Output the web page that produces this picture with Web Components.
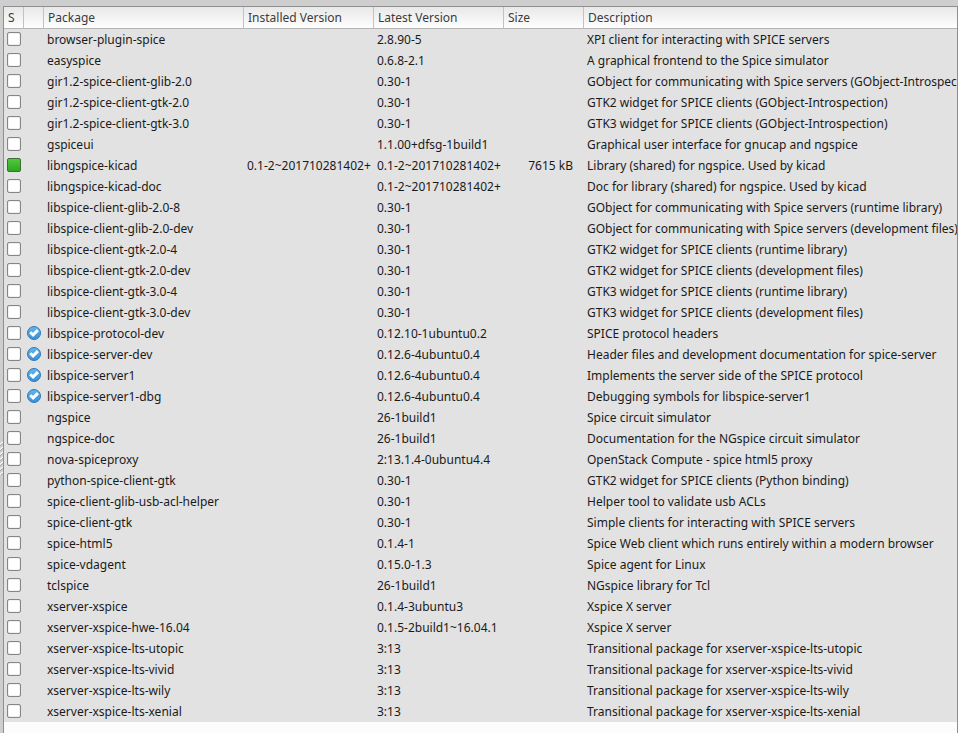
<!DOCTYPE html>
<html lang="en">
<head>
<meta charset="utf-8">
<meta name="viewport" content="width=device-width, initial-scale=1">
<title>Packages</title>
<style>
    html, body {
        height: 100%;
    }
    body {
        margin: 0;
        overflow: hidden;
        background: #cecece;
        color: #1a1a1a;
        font-family: "Noto Sans", sans-serif;
        font-size: 12px;
    }
</style>
</head>
<body>
<list-pane>
    <pane-grip slot="handle"></pane-grip>
    <package-table></package-table>
</list-pane>

<script>
const paneTemplate = document.createElement('template');
paneTemplate.innerHTML = `
    <style>
        :host {
            display: flex;
            height: 100%;
            padding-top: 6px;
            box-sizing: border-box;
        }
        .handle {
            display: flex;
            width: 3px;
            flex: none;
            align-items: center;
        }
        .view {
            flex: 1;
            min-width: 0;
            overflow: hidden;
            background: #fcfcfc;
            border: 1px solid #8f8f8f;
            border-bottom: none;
        }
    </style>
    <div class="handle"><slot name="handle"></slot></div>
    <div class="view"><slot></slot></div>
`;

class ListPane extends HTMLElement {
    constructor() {
        super();
        this.attachShadow({ mode: 'open' });
        this.shadowRoot.appendChild(paneTemplate.content.cloneNode(true));
    }
}
customElements.define('list-pane', ListPane);

const gripTemplate = document.createElement('template');
gripTemplate.innerHTML = `
    <style>
        :host {
            display: block;
            margin-top: 176px;
        }
        svg {
            display: block;
        }
    </style>
    <svg width="3" height="34" aria-hidden="true">
        <defs>
            <pattern id="dots" width="3" height="5" patternUnits="userSpaceOnUse">
                <path d="M0 3.5L3 1" stroke="#fafafa" stroke-width="1.3"/>
                <path d="M0 4.8L3 2.3" stroke="#9c9c9c" stroke-width=".8"/>
            </pattern>
        </defs>
        <rect width="3" height="34" fill="url(#dots)"/>
    </svg>
`;

class PaneGrip extends HTMLElement {
    constructor() {
        super();
        this.attachShadow({ mode: 'open' });
        this.shadowRoot.appendChild(gripTemplate.content.cloneNode(true));
    }
}
customElements.define('pane-grip', PaneGrip);

const headerTemplate = document.createElement('template');
headerTemplate.innerHTML = `
    <style>
        :host {
            display: block;
        }
        button {
            display: block;
            width: 100%;
            height: 22px;
            padding: 0 4px;
            border: none;
            border-right: 1px solid #c2c2c2;
            border-bottom: 1px solid #b4b4b4;
            background: linear-gradient(#e8e8e8, #fefefe);
            color: #3c3c3c;
            font: inherit;
            line-height: 20px;
            text-align: left;
            white-space: nowrap;
        }
        :host([last]) button {
            border-right: none;
        }
    </style>
    <button type="button"><slot></slot></button>
`;

class ColumnHeader extends HTMLElement {
    constructor() {
        super();
        this.attachShadow({ mode: 'open' });
        this.shadowRoot.appendChild(headerTemplate.content.cloneNode(true));
        const label = this.getAttribute('label');
        if (label) {
            this.shadowRoot.querySelector('button').setAttribute('aria-label', label);
        }
    }
}
customElements.define('column-header', ColumnHeader);

const markTemplate = document.createElement('template');
markTemplate.innerHTML = `
    <style>
        :host {
            display: block;
            width: 14px;
            height: 14px;
        }
        svg {
            display: block;
        }
    </style>
    <svg width="14" height="14" viewBox="0 0 14 14" aria-hidden="true">
        <defs>
            <linearGradient id="disc" x2="0" y2="1">
                <stop offset="0" stop-color="#5fb8f0"/>
                <stop offset="1" stop-color="#3690dc"/>
            </linearGradient>
        </defs>
        <circle cx="7" cy="7" r="6.5" fill="url(#disc)" stroke="#3a76aa"/>
        <path d="M3.2 6.2L6.1 8.9L10.9 4.1" fill="none" stroke="#fff" stroke-width="2.9"/>
    </svg>
`;

// Round badge for packages supported by the distribution
class SupportedMark extends HTMLElement {
    constructor() {
        super();
        this.attachShadow({ mode: 'open' });
        this.shadowRoot.appendChild(markTemplate.content.cloneNode(true));
    }
}
customElements.define('supported-mark', SupportedMark);

// name, latest version, description, extras
const packages = [
    ['browser-plugin-spice', '2.8.90-5', 'XPI client for interacting with SPICE servers'],
    ['easyspice', '0.6.8-2.1', 'A graphical frontend to the Spice simulator'],
    ['gir1.2-spice-client-glib-2.0', '0.30-1', 'GObject for communicating with Spice servers (GObject-Introspect'],
    ['gir1.2-spice-client-gtk-2.0', '0.30-1', 'GTK2 widget for SPICE clients (GObject-Introspection)'],
    ['gir1.2-spice-client-gtk-3.0', '0.30-1', 'GTK3 widget for SPICE clients (GObject-Introspection)'],
    ['gspiceui', '1.1.00+dfsg-1build1', 'Graphical user interface for gnucap and ngspice'],
    ['libngspice-kicad', '0.1-2~201710281402+', 'Library (shared) for ngspice. Used by kicad', { installed: '0.1-2~201710281402+', size: '7615 kB' }],
    ['libngspice-kicad-doc', '0.1-2~201710281402+', 'Doc for library (shared) for ngspice. Used by kicad'],
    ['libspice-client-glib-2.0-8', '0.30-1', 'GObject for communicating with Spice servers (runtime library)'],
    ['libspice-client-glib-2.0-dev', '0.30-1', 'GObject for communicating with Spice servers (development files)'],
    ['libspice-client-gtk-2.0-4', '0.30-1', 'GTK2 widget for SPICE clients (runtime library)'],
    ['libspice-client-gtk-2.0-dev', '0.30-1', 'GTK2 widget for SPICE clients (development files)'],
    ['libspice-client-gtk-3.0-4', '0.30-1', 'GTK3 widget for SPICE clients (runtime library)'],
    ['libspice-client-gtk-3.0-dev', '0.30-1', 'GTK3 widget for SPICE clients (development files)'],
    ['libspice-protocol-dev', '0.12.10-1ubuntu0.2', 'SPICE protocol headers', { supported: true }],
    ['libspice-server-dev', '0.12.6-4ubuntu0.4', 'Header files and development documentation for spice-server', { supported: true }],
    ['libspice-server1', '0.12.6-4ubuntu0.4', 'Implements the server side of the SPICE protocol', { supported: true }],
    ['libspice-server1-dbg', '0.12.6-4ubuntu0.4', 'Debugging symbols for libspice-server1', { supported: true }],
    ['ngspice', '26-1build1', 'Spice circuit simulator'],
    ['ngspice-doc', '26-1build1', 'Documentation for the NGspice circuit simulator'],
    ['nova-spiceproxy', '2:13.1.4-0ubuntu4.4', 'OpenStack Compute - spice html5 proxy'],
    ['python-spice-client-gtk', '0.30-1', 'GTK2 widget for SPICE clients (Python binding)'],
    ['spice-client-glib-usb-acl-helper', '0.30-1', 'Helper tool to validate usb ACLs'],
    ['spice-client-gtk', '0.30-1', 'Simple clients for interacting with SPICE servers'],
    ['spice-html5', '0.1.4-1', 'Spice Web client which runs entirely within a modern browser'],
    ['spice-vdagent', '0.15.0-1.3', 'Spice agent for Linux'],
    ['tclspice', '26-1build1', 'NGspice library for Tcl'],
    ['xserver-xspice', '0.1.4-3ubuntu3', 'Xspice X server'],
    ['xserver-xspice-hwe-16.04', '0.1.5-2build1~16.04.1', 'Xspice X server'],
    ['xserver-xspice-lts-utopic', '3:13', 'Transitional package for xserver-xspice-lts-utopic'],
    ['xserver-xspice-lts-vivid', '3:13', 'Transitional package for xserver-xspice-lts-vivid'],
    ['xserver-xspice-lts-wily', '3:13', 'Transitional package for xserver-xspice-lts-wily'],
    ['xserver-xspice-lts-xenial', '3:13', 'Transitional package for xserver-xspice-lts-xenial']
];

const tableTemplate = document.createElement('template');
tableTemplate.innerHTML = `
    <style>
        :host {
            display: block;
        }
        table {
            width: 100%;
            table-layout: fixed;
            border-collapse: collapse;
        }
        .icon { width: 20px; }
        .name { width: 200px; }
        .version { width: 130px; }
        .size { width: 80px; }
        th {
            padding: 0;
            font-weight: normal;
        }
        tbody {
            background: #e2e2e2;
        }
        td {
            height: 21px;
            padding: 0 0 0 3px;
            line-height: 21px;
            white-space: nowrap;
            overflow: hidden;
        }
        td:nth-child(6) {
            padding-right: 11px;
            text-align: right;
        }
        label {
            display: block;
        }
        input, supported-mark {
            margin: 0 0 1px;
        }
        input {
            appearance: none;
            display: block;
            box-sizing: border-box;
            width: 14px;
            height: 14px;
            border: 1px solid #868686;
            border-radius: 2px;
            background: #fff;
            box-shadow: inset 0 0 1px #777;
        }
        input:checked {
            border-color: #3a6e32;
            background: linear-gradient(#52c83c, #2fa723);
            box-shadow: none;
        }
    </style>
    <table>
        <colgroup>
            <col class="icon"><col class="icon"><col class="name"><col class="version">
            <col class="version"><col class="size"><col>
        </colgroup>
        <thead>
            <tr>
                <th><column-header>S</column-header></th>
                <th><column-header label="Supported"></column-header></th>
                <th><column-header>Package</column-header></th>
                <th><column-header>Installed Version</column-header></th>
                <th><column-header>Latest Version</column-header></th>
                <th><column-header>Size</column-header></th>
                <th><column-header last>Description</column-header></th>
            </tr>
        </thead>
        <tbody></tbody>
    </table>
`;

class PackageTable extends HTMLElement {
    constructor() {
        super();
        this.attachShadow({ mode: 'open' });
        this.shadowRoot.appendChild(tableTemplate.content.cloneNode(true));
        this.shadowRoot.querySelector('tbody').innerHTML = packages.map(this.row).join('');
    }

    row([name, latest, description, extra = {}], i) {
        return `
            <tr>
                <td><input type="checkbox" id="pkg${i}"${extra.installed ? ' checked' : ''}></td>
                <td>${extra.supported ? '<supported-mark></supported-mark>' : ''}</td>
                <td><label for="pkg${i}">${name}</label></td>
                <td>${extra.installed || ''}</td>
                <td>${latest}</td>
                <td>${extra.size || ''}</td>
                <td>${description}</td>
            </tr>`;
    }
}
customElements.define('package-table', PackageTable);
</script>
</body>
</html>
